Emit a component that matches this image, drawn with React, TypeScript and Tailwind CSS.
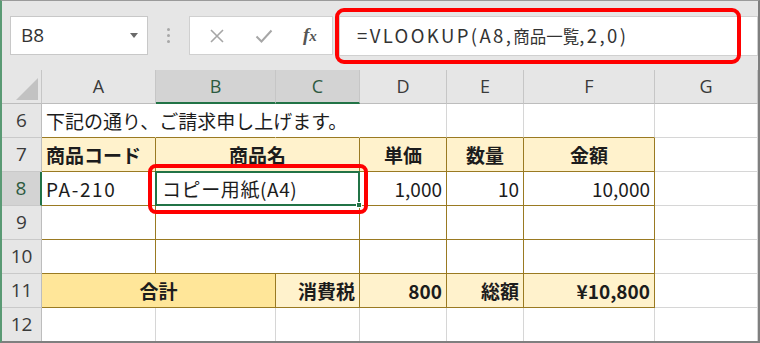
import clsx from "clsx";
import type { ReactNode } from "react";

const jp = "font-['Noto_Sans_CJK_JP',sans-serif]";
const ui = "font-['Open_Sans','Noto_Sans',sans-serif]";

const GOLD = "border-[#9a7a22]";
const GRID = "border-[#d6d6d6]";

function Cell({
  children,
  className,
}: {
  children?: ReactNode;
  className?: string;
}) {
  return (
    <div
      className={clsx(
        "flex h-[34px] items-center border-r border-b px-[4px] pt-[2px] text-[19px] whitespace-nowrap text-[#1c1c1c]",
        jp,
        className,
      )}
    >
      {children}
    </div>
  );
}

function RowHead({ n, active }: { n: number; active?: boolean }) {
  return (
    <div
      className={clsx(
        "flex h-[34px] items-center justify-center border-b border-b-[#c9c9c9] text-[19px]",
        ui,
        active
          ? "border-r-2 border-r-[#217346] bg-[#d3d3d3] text-[#2d5a3f]"
          : "border-r border-r-[#bdbdbd] bg-[#e6e6e6] text-[#3a3a3a]",
      )}
    >
      {n}
    </div>
  );
}

function ColHead({ label, active }: { label: string; active?: boolean }) {
  return (
    <div
      className={clsx(
        "flex h-[34px] items-center justify-center border-r border-r-[#c6c6c6] text-[18px]",
        ui,
        active
          ? "border-b-2 border-b-[#217346] bg-[#d3d3d3] text-[#2d5a3f]"
          : "border-b border-b-[#bdbdbd] bg-[#e6e6e6] text-[#3a3a3a]",
      )}
    >
      {label}
    </div>
  );
}

export default function App() {
  return (
    <div className="relative h-[343px] w-[760px] overflow-hidden border-t border-r-2 border-b-2 border-l-2 border-t-[#9a9a9a] border-r-[#7f7f7f] border-b-[#7f7f7f] border-l-[#5a9a74] bg-white">
      {/* formula bar */}
      <div className="flex h-[69px] items-start bg-[#e6e6e6] pt-[15px]">
        <div
          className={clsx(
            "ml-[8px] flex h-[39px] w-[138px] items-center justify-between border border-[#c8c8c8] bg-white pr-[9px] pl-[10px] text-[19px] text-[#333]",
            ui,
          )}
        >
          <span>B8</span>
          <span className="h-0 w-0 border-x-[4.5px] border-t-[5px] border-x-transparent border-t-[#6a6a6a]" />
        </div>
        <div className="flex h-[39px] w-[41px] flex-col items-center justify-center gap-[3px]">
          <span className="h-[3px] w-[3px] rounded-full bg-[#a8a8a8]" />
          <span className="h-[3px] w-[3px] rounded-full bg-[#a8a8a8]" />
          <span className="h-[3px] w-[3px] rounded-full bg-[#a8a8a8]" />
        </div>
        <div className="flex h-[39px] w-[144px] items-center border border-[#d0d0d0] bg-white">
          <svg width="16" height="16" viewBox="0 0 16 16" className="ml-[19px]">
            <path d="M2 2 L14 14 M14 2 L2 14" stroke="#a6a6a6" strokeWidth="1.6" />
          </svg>
          <svg width="18" height="16" viewBox="0 0 18 16" className="ml-[30px]">
            <path d="M1.5 8.5 L6.5 13.5 L16.5 2.5" stroke="#a6a6a6" strokeWidth="2" fill="none" />
          </svg>
          <span className="ml-[30px] font-['Liberation_Serif',serif] text-[19px] font-bold italic text-[#555]">
            f<span className="text-[15px]">x</span>
          </span>
        </div>
        <div
          className={clsx(
            "ml-[6px] flex h-[40px] flex-1 items-center border border-[#d0d0d0] bg-white pl-[17px] text-[18.5px] text-[#333]",
            jp,
          )}
        >
          <span className="tracking-[2.4px]">=VLOOKUP(A8,</span>
          <span className="text-[16.5px]">商品一覧</span>
          <span className="tracking-[2.4px]">,2,0)</span>
        </div>
      </div>

      {/* sheet */}
      <div className="grid grid-cols-[40px_114px_120px_84px_87px_77px_131px_1fr]">
        <div className="relative h-[34px] border-r border-b border-r-[#c6c6c6] border-b-[#bdbdbd] bg-[#e6e6e6]">
          <svg width="40" height="34" className="absolute inset-0">
            <polygon points="14,30 36,8 36,30" fill="#c2c2c2" />
          </svg>
        </div>
        <ColHead label="A" />
        <ColHead label="B" active />
        <ColHead label="C" active />
        <ColHead label="D" />
        <ColHead label="E" />
        <ColHead label="F" />
        <ColHead label="G" />

        {/* row 6 */}
        <RowHead n={6} />
        <Cell className="relative z-10 overflow-visible border-r-transparent border-b-[#9a7a22] px-[3px]">
          下記の通り、ご請求申し上げます。
        </Cell>
        <Cell className="border-r-transparent border-b-[#9a7a22]" />
        <Cell className="border-r-transparent border-b-[#9a7a22]" />
        <Cell className="border-r-[#d6d6d6] border-b-[#9a7a22]" />
        <Cell className="border-r-[#d6d6d6] border-b-[#9a7a22]" />
        <Cell className="border-r-[#d6d6d6] border-b-[#9a7a22]" />
        <Cell className={GRID} />

        {/* row 7 */}
        <RowHead n={7} />
        <Cell className={clsx(GOLD, "bg-[#fff2cc] font-bold")}>商品コード</Cell>
        <Cell className={clsx(GOLD, "col-span-2 justify-center bg-[#fff2cc] font-bold")}>商品名</Cell>
        <Cell className={clsx(GOLD, "justify-center bg-[#fff2cc] font-bold")}>単価</Cell>
        <Cell className={clsx(GOLD, "justify-center bg-[#fff2cc] font-bold")}>数量</Cell>
        <Cell className={clsx(GOLD, "justify-center bg-[#fff2cc] font-bold")}>金額</Cell>
        <Cell className={GRID} />

        {/* row 8 */}
        <RowHead n={8} active />
        <Cell className={GOLD}>
          <span className="tracking-[1.6px]">PA-210</span>
        </Cell>
        <Cell className={clsx(GOLD, "relative col-span-2")}>
          <span className="pl-[2px] tracking-[0.6px]">コピー用紙(A4)</span>
          <span className="absolute inset-[-1px] border-2 border-[#217346]" />
          <span className="absolute right-[-3px] bottom-[-3px] h-[6px] w-[6px] border border-white bg-[#217346]" />
        </Cell>
        <Cell className={clsx(GOLD, "justify-end")}>1,000</Cell>
        <Cell className={clsx(GOLD, "justify-end")}>10</Cell>
        <Cell className={clsx(GOLD, "justify-end")}>10,000</Cell>
        <Cell className={GRID} />

        {/* rows 9, 10 */}
        {[9, 10].map((n) => (
          <div key={n} className="contents">
            <RowHead n={n} />
            <Cell className={GOLD} />
            <Cell className={clsx(GOLD, "col-span-2")} />
            <Cell className={GOLD} />
            <Cell className={GOLD} />
            <Cell className={GOLD} />
            <Cell className={GRID} />
          </div>
        ))}

        {/* row 11 */}
        <RowHead n={11} />
        <Cell className={clsx(GOLD, "col-span-2 justify-center bg-[#ffe699] font-bold")}>合計</Cell>
        <Cell className={clsx(GOLD, "justify-end bg-[#fff2cc] font-bold")}>消費税</Cell>
        <Cell className={clsx(GOLD, "justify-end bg-[#fff2cc] font-bold")}>800</Cell>
        <Cell className={clsx(GOLD, "justify-end bg-[#fff2cc] font-bold")}>総額</Cell>
        <Cell className={clsx(GOLD, "justify-end bg-[#fff2cc] font-bold")}>¥10,800</Cell>
        <Cell className={GRID} />

        {/* row 12 */}
        <RowHead n={12} />
        <Cell className={GRID} />
        <Cell className={GRID} />
        <Cell className={GRID} />
        <Cell className={GRID} />
        <Cell className={GRID} />
        <Cell className={GRID} />
        <Cell className={GRID} />
      </div>

      {/* red callouts */}
      <div className="absolute top-[7px] left-[333px] h-[56px] w-[406px] rounded-[9px] border-4 border-[#ff0000]" />
      <div className="absolute top-[163px] left-[146px] h-[50px] w-[220px] rounded-[8px] border-4 border-[#ff0000]" />
    </div>
  );
}
